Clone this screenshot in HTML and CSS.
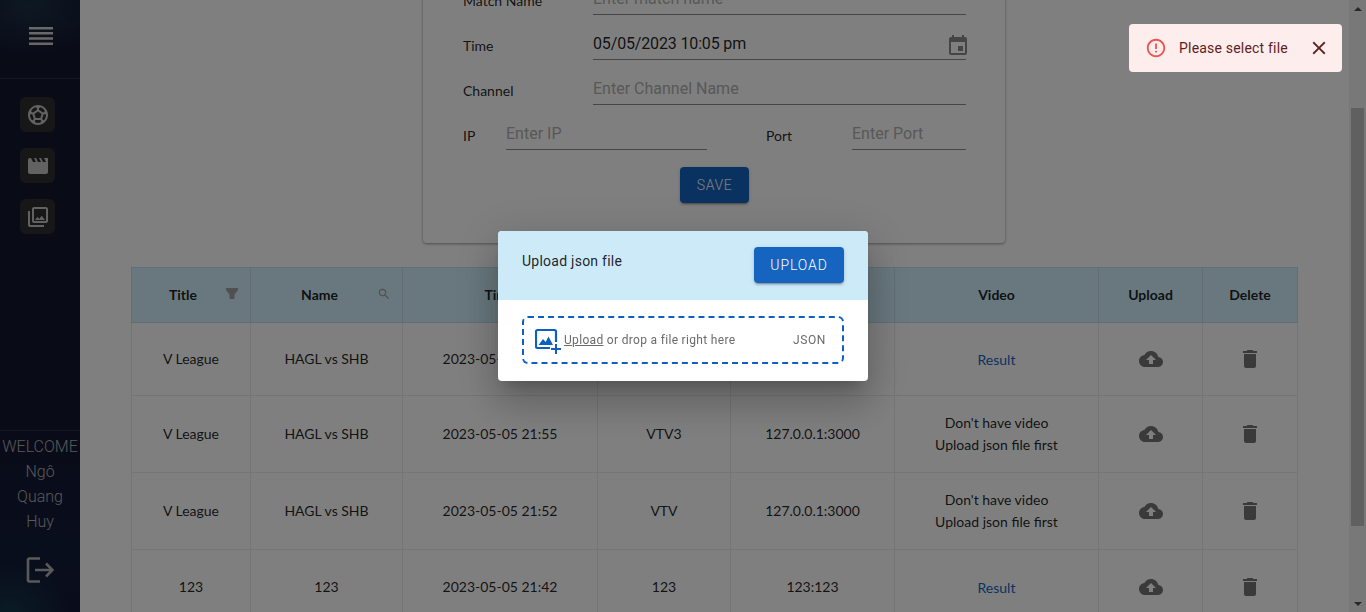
FILE: index.html
```html
<!DOCTYPE html>
<html>
<head>
<meta charset="UTF-8">
<meta name="viewport" content="width=device-width, initial-scale=1">
<title>Match list</title>
<link rel="stylesheet" href="styles.css">
</head>
<body>
<div class="app">
	<aside class="sidebar">
		<div class="side-top">
			<svg class="menu-icon" width="26" height="20" viewBox="0 0 26 20"><path d="M1 1h24v2.4H1zM1 6h24v2.4H1zM1 11.3h24v2.4H1zM1 16.6h24V19H1z"/></svg>
		</div>
		<nav class="side-nav">
			<a class="side-item"><svg width="24" height="24" viewBox="0 0 24 24"><path d="M12 2C6.48 2 2 6.48 2 12s4.48 10 10 10 10-4.48 10-10S17.52 2 12 2zm1 3.3 1.35-.95c1.82.56 3.37 1.76 4.38 3.34l-.39 1.34-1.35.46L13 6.7V5.3zm-3.35-.95L11 5.3v1.4L7.01 9.49l-1.35-.46-.39-1.34c1.01-1.57 2.56-2.77 4.38-3.34zM7.08 17.11l-1.14.1C4.73 15.81 4 13.99 4 12c0-.12.01-.23.02-.35l1-.73 1.38.48 1.46 4.34-.78 1.37zm7.42 2.48c-.79.26-1.63.41-2.5.41s-1.71-.15-2.5-.41l-.69-1.49.64-1.1h5.11l.64 1.11-.7 1.48zM14.27 15H9.73l-1.35-4.02L12 8.44l3.63 2.54L14.27 15zm3.79 2.21-1.14-.1-.79-1.37 1.46-4.34 1.39-.47 1 .73c.01.11.02.22.02.34 0 1.99-.73 3.81-1.94 5.21z"/></svg></a>
			<a class="side-item"><svg width="24" height="24" viewBox="0 0 24 24"><path d="M18 4l2 4h-3l-2-4h-2l2 4h-3l-2-4H8l2 4H7L5 4H4c-1.1 0-1.99.9-1.99 2L2 18c0 1.1.9 2 2 2h16c1.1 0 2-.9 2-2V4h-4z"/></svg></a>
			<a class="side-item"><svg width="24" height="24" viewBox="0 0 24 24"><path d="M20 4v12H8V4h12m0-2H8c-1.1 0-2 .9-2 2v12c0 1.1.9 2 2 2h12c1.1 0 2-.9 2-2V4c0-1.1-.9-2-2-2zm-8.5 9.67l1.69 2.26 2.48-3.1L19 15H9zM2 6v14c0 1.1.9 2 2 2h14v-2H4V6H2z"/></svg></a>
		</nav>
		<div class="side-user">
			<div class="welcome">WELCOME</div>
			<div class="user-name">Ngô</div>
			<div class="user-name">Quang</div>
			<div class="user-name">Huy</div>
			<svg class="logout-icon" width="28" height="26" viewBox="0 0 28 26"><path d="M14 1.500H3.500A1.500 1.500 0 0 0 2 3v20a1.500 1.500 0 0 0 1.500 1.500H14M9 13h17.500M20 6.500 26.500 13 20 19.500" fill="none" stroke-width="2.600"/></svg>
		</div>
	</aside>

	<main class="content">
		<section class="match-card">
			<div class="form-row">
				<label class="form-label">Match Name</label>
				<div class="field"><input class="field-input" placeholder="Enter match name"></div>
			</div>
			<div class="form-row">
				<label class="form-label">Time</label>
				<div class="field">
					<input class="field-input filled" value="05/05/2023 10:05 pm">
					<svg class="calendar-icon" width="24" height="24" viewBox="0 0 24 24"><path d="M17 12h-5v5h5v-5zM16 1v2H8V1H6v2H5c-1.110 0-1.990.9-1.990 2L3 19c0 1.100.89 2 2 2h14c1.100 0 2-.9 2-2V5c0-1.100-.9-2-2-2h-1V1h-2zm3 18H5V8h14v11z"/></svg>
				</div>
			</div>
			<div class="form-row">
				<label class="form-label">Channel</label>
				<div class="field"><input class="field-input" placeholder="Enter Channel Name"></div>
			</div>
			<div class="form-row">
				<label class="form-label label-ip">IP</label>
				<div class="field field-ip"><input class="field-input" placeholder="Enter IP"></div>
				<label class="form-label label-port">Port</label>
				<div class="field field-port"><input class="field-input" placeholder="Enter Port"></div>
			</div>
			<div class="form-actions"><button class="save-btn">SAVE</button></div>
		</section>

		<table class="match-table">
			<colgroup>
				<col class="col-title"><col class="col-name"><col class="col-time"><col class="col-channel">
				<col class="col-ip"><col class="col-video"><col class="col-upload"><col class="col-delete">
			</colgroup>
			<thead>
				<tr>
					<th><div class="th-inner">Title<svg class="th-icon" width="14" height="14" viewBox="0 0 14 14"><path d="M1 1h12v2L9.500 7.500V12h-5V7.500L1 3z"/></svg></div></th>
					<th><div class="th-inner th-name">Name<svg class="th-icon" width="14" height="14" viewBox="0 0 24 24"><path d="M15.500 14h-.79l-.28-.27C15.410 12.590 16 11.110 16 9.500 16 5.910 13.090 3 9.500 3S3 5.910 3 9.500 5.910 16 9.500 16c1.610 0 3.090-.59 4.230-1.570l.27.28v.79l5 4.990L20.490 19l-4.990-5zm-6 0C7.010 14 5 11.990 5 9.500S7.010 5 9.500 5 14 7.010 14 9.500 11.990 14 9.500 14z"/></svg></div></th>
					<th><div class="th-inner th-plain">Time</div></th>
					<th><div class="th-inner th-plain">Channel</div></th>
					<th><div class="th-inner th-plain">IP</div></th>
					<th><div class="th-inner th-plain">Video</div></th>
					<th><div class="th-inner th-plain">Upload</div></th>
					<th><div class="th-inner th-plain">Delete</div></th>
				</tr>
			</thead>
			<tbody>
				<tr class="row-short">
					<td>V League</td><td>HAGL vs SHB</td><td>2023-05-05 22:05</td><td>VTV</td><td>127.0.0.1:3000</td>
					<td><a class="result-link">Result</a></td>
					<td><svg class="action-icon" width="24" height="24" viewBox="0 0 24 24"><path d="M19.350 10.040C18.670 6.590 15.640 4 12 4 9.110 4 6.600 5.640 5.350 8.040 2.340 8.360 0 10.910 0 14c0 3.310 2.690 6 6 6h13c2.760 0 5-2.240 5-5 0-2.640-2.050-4.780-4.650-4.960zM14 13v4h-4v-4H7l5-5 5 5h-3z"/></svg></td>
					<td><svg class="action-icon" width="24" height="24" viewBox="0 0 24 24"><path d="M6 19c0 1.100.9 2 2 2h8c1.100 0 2-.9 2-2V7H6v12zM19 4h-3.500l-1-1h-5l-1 1H5v2h14V4z"/></svg></td>
				</tr>
				<tr>
					<td>V League</td><td>HAGL vs SHB</td><td>2023-05-05 21:55</td><td>VTV3</td><td>127.0.0.1:3000</td>
					<td>Don't have video<br>Upload json file first</td>
					<td><svg class="action-icon" width="24" height="24" viewBox="0 0 24 24"><path d="M19.350 10.040C18.670 6.590 15.640 4 12 4 9.110 4 6.600 5.640 5.350 8.040 2.340 8.360 0 10.910 0 14c0 3.310 2.690 6 6 6h13c2.760 0 5-2.240 5-5 0-2.640-2.050-4.780-4.650-4.960zM14 13v4h-4v-4H7l5-5 5 5h-3z"/></svg></td>
					<td><svg class="action-icon" width="24" height="24" viewBox="0 0 24 24"><path d="M6 19c0 1.100.9 2 2 2h8c1.100 0 2-.9 2-2V7H6v12zM19 4h-3.500l-1-1h-5l-1 1H5v2h14V4z"/></svg></td>
				</tr>
				<tr>
					<td>V League</td><td>HAGL vs SHB</td><td>2023-05-05 21:52</td><td>VTV</td><td>127.0.0.1:3000</td>
					<td>Don't have video<br>Upload json file first</td>
					<td><svg class="action-icon" width="24" height="24" viewBox="0 0 24 24"><path d="M19.350 10.040C18.670 6.590 15.640 4 12 4 9.110 4 6.600 5.640 5.350 8.040 2.340 8.360 0 10.910 0 14c0 3.310 2.690 6 6 6h13c2.760 0 5-2.240 5-5 0-2.640-2.050-4.780-4.650-4.960zM14 13v4h-4v-4H7l5-5 5 5h-3z"/></svg></td>
					<td><svg class="action-icon" width="24" height="24" viewBox="0 0 24 24"><path d="M6 19c0 1.100.9 2 2 2h8c1.100 0 2-.9 2-2V7H6v12zM19 4h-3.500l-1-1h-5l-1 1H5v2h14V4z"/></svg></td>
				</tr>
				<tr class="row-short">
					<td>123</td><td>123</td><td>2023-05-05 21:42</td><td>123</td><td>123:123</td>
					<td><a class="result-link">Result</a></td>
					<td><svg class="action-icon" width="24" height="24" viewBox="0 0 24 24"><path d="M19.350 10.040C18.670 6.590 15.640 4 12 4 9.110 4 6.600 5.640 5.350 8.040 2.340 8.360 0 10.910 0 14c0 3.310 2.690 6 6 6h13c2.760 0 5-2.240 5-5 0-2.640-2.050-4.780-4.650-4.960zM14 13v4h-4v-4H7l5-5 5 5h-3z"/></svg></td>
					<td><svg class="action-icon" width="24" height="24" viewBox="0 0 24 24"><path d="M6 19c0 1.100.9 2 2 2h8c1.100 0 2-.9 2-2V7H6v12zM19 4h-3.500l-1-1h-5l-1 1H5v2h14V4z"/></svg></td>
				</tr>
			</tbody>
		</table>
	</main>

	<div class="scrollbar">
		<div class="scroll-up"></div>
		<div class="scroll-track"><div class="scroll-thumb"></div></div>
		<div class="scroll-down"></div>
	</div>
</div>

<div class="backdrop">
	<div class="modal">
		<div class="modal-head">
			<div class="modal-title">Upload json file</div>
			<button class="upload-btn">UPLOAD</button>
		</div>
		<div class="modal-body">
			<div class="dropzone">
				<svg class="drop-icon" width="28" height="28" viewBox="0 0 28 28"><path d="M15 22H2.500A1.500 1.500 0 0 1 1 20.500v-15A1.500 1.500 0 0 1 2.500 4h17A1.500 1.500 0 0 1 21 5.500V16" fill="none" stroke="#0d5fc4" stroke-width="2.200"/><path d="M3.500 19l4.500-6 2.700 3 2.800-5.500 4.500 8.500z" fill="#0d5fc4"/><path d="M20 18h2v4h4v2h-4v4h-2v-4h-4v-2h4z" fill="#0d5fc4"/></svg>
				<div class="drop-text"><u>Upload</u> or drop a file right here</div>
				<div class="drop-type">JSON</div>
			</div>
		</div>
	</div>
</div>

<div class="toast">
	<svg class="toast-icon" width="22" height="22" viewBox="0 0 24 24"><path d="M11 15h2v2h-2zm0-8h2v6h-2zm.99-5C6.470 2 2 6.480 2 12s4.470 10 9.990 10C17.520 22 22 17.520 22 12S17.520 2 11.990 2zM12 20c-4.420 0-8-3.580-8-8s3.580-8 8-8 8 3.580 8 8-3.580 8-8 8z"/></svg>
	<div class="toast-text">Please select file</div>
	<svg class="toast-close" width="22" height="22" viewBox="0 0 24 24"><path d="M19 6.410 17.590 5 12 10.590 6.410 5 5 6.410 10.590 12 5 17.590 6.410 19 12 13.410 17.590 19 19 17.590 13.410 12z"/></svg>
</div>
</body>
</html>
```

FILE: styles.css
```css
* {
	box-sizing: border-box;
}

html, body {
	margin: 0;
	height: 612px;
	overflow: hidden;
}

body {
	background: #fff;
	font-family: "Lato", "Noto Sans", sans-serif;
	font-size: 14px;
	color: rgba(0, 0, 0, 0.87);
}

.app {
	display: flex;
	height: 612px;
}

/* sidebar */
.sidebar {
	flex: 0 0 80px;
	display: flex;
	flex-direction: column;
	color: #b0b0b0;
	background:
		radial-gradient(ellipse 80px 50px at 30px 6px, #1b3146 0%, rgba(27, 49, 70, 0) 100%),
		radial-gradient(ellipse 60px 50px at 10px 612px, #143648 0%, rgba(20, 54, 72, 0) 100%),
		linear-gradient(#13172f 0%, #12162f 70%, #121c3a 90%, #121a36 100%);
}

.side-top {
	height: 79px;
	display: flex;
	align-items: center;
	justify-content: center;
	padding: 0 0 6px 2px;
	border-bottom: 1px solid #2b3048;
}

.menu-icon {
	fill: #d0d0d0;
}

.side-nav {
	display: flex;
	flex-direction: column;
	align-items: center;
	gap: 16px;
	padding: 18px 5px 0 0;
}

.side-item {
	width: 35px;
	height: 35px;
	display: flex;
	align-items: center;
	justify-content: center;
	border-radius: 6px;
	background: #2e2e2e;
	fill: #c4c4c4;
}

.side-user {
	margin-top: auto;
	border-top: 1px solid #2b3048;
	padding-top: 3px;
	text-align: center;
	font-family: "Roboto", sans-serif;
	font-weight: 300;
	font-size: 16px;
	line-height: 25px;
}

.logout-icon {
	display: block;
	margin: 23px auto 29px;
	stroke: #b4b4b4;
}

/* main */
.content {
	flex: 1;
	min-width: 0;
	padding: 0 52px 0 51px;
	overflow: hidden;
}

.match-card {
	width: 582px;
	height: 302px;
	margin: -59px auto 24px;
	padding: 29px 39px 0 40px;
	background: #fff;
	border-radius: 4px;
	box-shadow: 0 1px 3px rgba(0, 0, 0, 0.4);
}

.form-row {
	display: flex;
	height: 45px;
}

.form-label {
	flex: 0 0 130px;
	padding-top: 21px;
	line-height: 20px;
}

.label-ip {
	flex-basis: 43px;
}

.label-port {
	flex-basis: 86px;
	margin-left: 59px;
}

.field {
	flex: 1;
	position: relative;
	height: 45px;
	border-bottom: 1px solid #8c8c8c;
}

.field-ip {
	flex: 0 0 201px;
}

.field-port {
	flex: 0 0 114px;
}

.field-input {
	display: block;
	width: 100%;
	height: 44px;
	padding: 12px 0 0;
	border: 0;
	outline: 0;
	background: transparent;
	font-family: "Roboto", sans-serif;
	font-size: 16px;
}

.field-input::placeholder {
	color: #b0b0b0;
	opacity: 1;
}

.field-input.filled {
	color: rgba(0, 0, 0, 0.87);
	letter-spacing: -0.15px;
}

.calendar-icon {
	position: absolute;
	right: -4px;
	top: 19px;
	fill: #8a8a8a;
}

.form-actions {
	display: flex;
	justify-content: center;
	padding-top: 17px;
}

.save-btn,
.upload-btn {
	border: 0;
	border-radius: 4px;
	background: #1565c0;
	color: #fff;
	font-family: "Roboto", sans-serif;
	font-weight: 300;
	font-size: 14px;
	box-shadow: 0 3px 1px -2px rgba(0, 0, 0, 0.2), 0 2px 2px rgba(0, 0, 0, 0.14), 0 1px 5px rgba(0, 0, 0, 0.12);
}

.save-btn {
	width: 69px;
	height: 36px;
	letter-spacing: 0.6px;
}

/* table */
.match-table {
	width: 1166px;
	border-collapse: collapse;
	table-layout: fixed;
	text-align: center;
}

.col-title { width: 119px; }
.col-name { width: 152px; }
.col-time { width: 195px; }
.col-channel { width: 133px; }
.col-ip { width: 164px; }
.col-video { width: 204px; }
.col-upload { width: 104px; }
.col-delete { width: 95px; }

.match-table th {
	height: 55px;
	background: #d0f0fd;
	border: 1px solid #c4dde8;
	font-weight: 700;
	padding: 0;
}

.match-table td {
	height: 77px;
	padding: 0;
	border: 1px solid #ebebeb;
	line-height: 22px;
}

.match-table .row-short td {
	height: 73px;
}

.match-table tbody tr:nth-child(4) td {
	height: 74px;
}

.th-inner {
	position: relative;
	padding: 0 16px 2px 0;
}

.th-name {
	padding-right: 14px;
}

.th-plain {
	padding-right: 0;
}

.th-icon {
	position: absolute;
	right: 11px;
	top: 1px;
	fill: #a0a0a0;
}

.result-link {
	display: block;
	padding-top: 2px;
	color: #1565c0;
}

.action-icon {
	display: block;
	margin: 0 auto;
	fill: #757575;
}

/* fake scrollbar, drawn so it sits under the backdrop */
.scrollbar {
	flex: 0 0 17px;
	display: flex;
	flex-direction: column;
	background: #f1f1f1;
}

.scroll-up,
.scroll-down {
	flex: 0 0 17px;
	display: flex;
	align-items: center;
	justify-content: center;
}

.scroll-up::after,
.scroll-down::after {
	content: "";
	border-left: 4px solid transparent;
	border-right: 4px solid transparent;
}

.scroll-up::after {
	border-bottom: 4px solid #505050;
}

.scroll-down::after {
	border-top: 4px solid #505050;
}

.scroll-track {
	flex: 1;
	padding: 91px 2px 69px;
}

.scroll-thumb {
	height: 100%;
	background: #c1c1c1;
}

/* overlay stuff */
.backdrop {
	position: fixed;
	inset: 0;
	display: flex;
	align-items: center;
	justify-content: center;
	background: rgba(0, 0, 0, 0.5);
}

.modal {
	width: 370px;
	height: 150px;
	border-radius: 4px;
	overflow: hidden;
	background: #fff;
	box-shadow: 0 11px 15px -7px rgba(0, 0, 0, 0.2), 0 24px 38px 3px rgba(0, 0, 0, 0.14), 0 9px 46px 8px rgba(0, 0, 0, 0.12);
}

.modal-head {
	height: 69px;
	display: flex;
	justify-content: space-between;
	align-items: flex-start;
	padding: 16px 24px;
	background: #cdeaf9;
}

.modal-title {
	font-family: "Roboto", sans-serif;
	font-size: 14px;
	line-height: 28px;
	letter-spacing: 0.25px;
}

.upload-btn {
	width: 90px;
	height: 36px;
	letter-spacing: 0.9px;
}

.modal-body {
	padding: 16px 24px;
}

.dropzone {
	height: 48px;
	display: flex;
	align-items: center;
	padding: 0 16px 0 11px;
	border: 2px dashed #0d5fc4;
	border-radius: 6px;
	font-family: "Roboto", sans-serif;
	font-size: 12px;
	letter-spacing: 0.32px;
	color: #6b6b6b;
}

.drop-icon {
	flex: none;
	margin-right: 1px;
}

.drop-type {
	margin-left: auto;
	letter-spacing: 0.6px;
}

.toast {
	position: fixed;
	top: 24px;
	right: 24px;
	width: 213px;
	height: 48px;
	display: flex;
	align-items: center;
	padding: 0 12px 0 16px;
	border-radius: 4px;
	background: #fdeded;
	color: #5f2120;
	font-family: "Roboto", sans-serif;
	font-size: 14px;
	letter-spacing: 0.2px;
}

.toast-icon {
	flex: none;
	fill: #ef5350;
	margin-right: 12px;
}

.toast-close {
	flex: none;
	margin-left: auto;
	fill: #5f2120;
}
```
